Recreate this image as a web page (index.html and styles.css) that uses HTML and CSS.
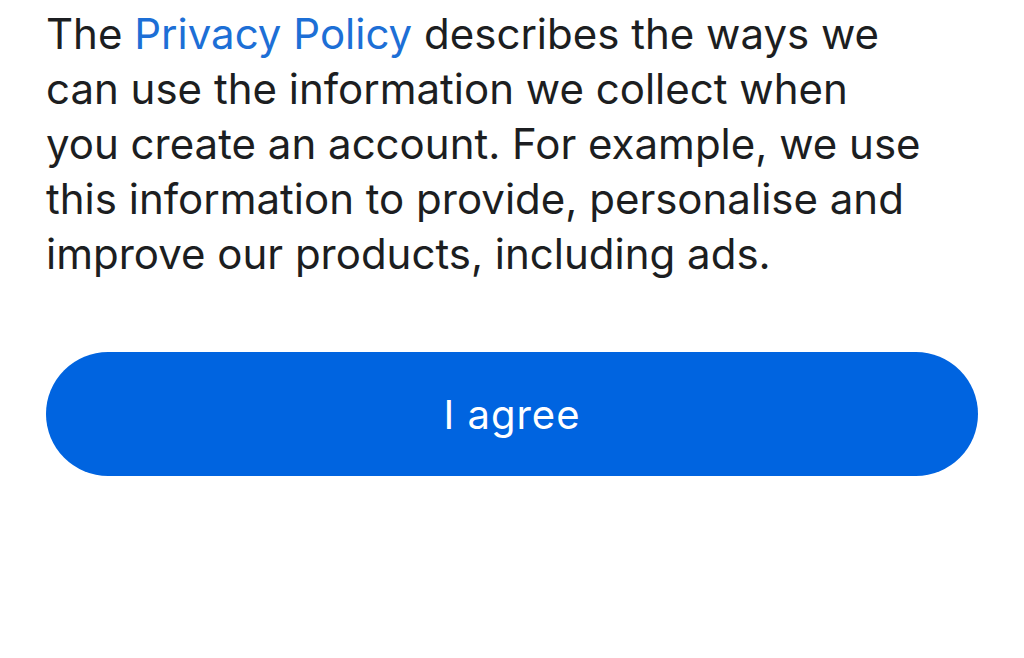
FILE: index.html
```html
<!DOCTYPE html>
<html lang="en">
<head>
  <meta charset="UTF-8" />
  <meta name="viewport" content="width=device-width, initial-scale=1.0"/>
  <title>Privacy Policy</title>
  <link rel="stylesheet" href="styles.css">
</head>
<body>

  <div class="main-content">
    <p class="policy-text">
      The <a href="#">Privacy Policy</a> describes the ways we<br />
      can use the information we collect when<br />
      you create an account. For example, we use<br />
      this information to provide, personalise and<br />
      improve our products, including ads.
    </p>

    <button class="agree-button" type="button">I agree</button>
  </div>

</body>
</html>
```

FILE: styles.css
```css
body {
  font-family: Inter, "Noto Sans", sans-serif;
  margin: 0;
  background-color: #ffffff;
}

/* Conteúdo principal */
.main-content {
  padding: 6px 46px 0 46px;
}

.policy-text {
  margin: 0;
  white-space: nowrap;
  font-size: 42px;
  line-height: 55px;
  color: #1c1e21;
}

.policy-text a {
  color: #1d6fd6;
  text-decoration: none;
}

.agree-button {
  display: block;
  width: 932px;
  height: 124px;
  margin-top: 71px;
  border: none;
  border-radius: 62px;
  background-color: #0064e0;
  color: #ffffff;
  font-family: Inter, "Noto Sans", sans-serif;
  font-size: 40px;
  letter-spacing: 1px;
  cursor: pointer;
}
```
